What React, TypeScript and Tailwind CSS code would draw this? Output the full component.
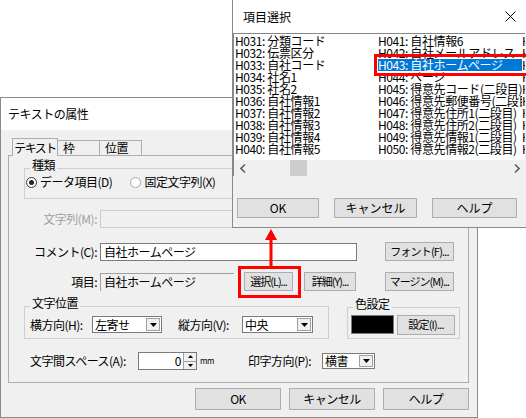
import React from 'react';

const col1 = [
  'H031: 分類コード',
  'H032: 伝票区分',
  'H033: 自社コード',
  'H034: 社名1',
  'H035: 社名2',
  'H036: 自社情報1',
  'H037: 自社情報2',
  'H038: 自社情報3',
  'H039: 自社情報4',
  'H040: 自社情報5',
];

const col2 = [
  'H041: 自社情報6',
  'H042: 自社メールアドレス',
  'H043: 自社ホームページ',
  'H044: ページ',
  'H045: 得意先コード(二段目)',
  'H046: 得意先郵便番号(二段目)',
  'H047: 得意先住所1(二段目)',
  'H048: 得意先住所2(二段目)',
  'H049: 得意先情報1(二段目)',
  'H050: 得意先情報2(二段目)',
];

const col3 = [
  'H051: 得意先情報3(二段目)',
  'H052: 得意先情報4(二段目)',
  'H053: 得意先情報5(二段目)',
  'H054: 得意先情報6(二段目)',
  'H055: 得意先情報7(二段目)',
  'H056: 得意先情報8(二段目)',
  'H057: 得意先情報9(二段目)',
  'H058: 得意先情報10(二段目)',
  'H059: 得意先情報11(二段目)',
  'H060: 得意先情報12(二段目)',
];

function Button({ label, className = '' }: { label: string; className?: string }) {
  return (
    <button
      className={`flex shrink-0 items-center justify-center overflow-hidden whitespace-nowrap border border-[#adadad] bg-[#e1e1e1] leading-none text-black ${className}`}
    >
      {label}
    </button>
  );
}

function Dropdown({ value, className = '' }: { value: string; className?: string }) {
  return (
    <div className={`flex shrink-0 items-stretch border border-[#7a7a7a] bg-white ${className}`}>
      <span className="flex flex-1 items-center whitespace-nowrap pl-[2px] leading-none">{value}</span>
      <span className="m-[1px] flex w-[14px] items-center justify-center border border-[#a0a0a0] bg-[#f0f0f0]">
        <svg width="7" height="4" viewBox="0 0 7 4">
          <path d="M0 0h7L3.5 4z" fill="#000" />
        </svg>
      </span>
    </div>
  );
}

function Group({ title, className = '', children }: { title: string; className?: string; children?: React.ReactNode }) {
  return (
    <div className={`relative shrink-0 border border-[#cfcfcf] ${className}`}>
      <span className="absolute -top-[11px] left-[5px] whitespace-nowrap bg-[#f0f0f0] px-[2px] leading-[14px]">{title}</span>
      {children}
    </div>
  );
}

function Radio({ checked, label }: { checked?: boolean; label: string }) {
  return (
    <label className="flex items-center gap-[3px] whitespace-nowrap">
      <span
        className={`flex h-[11px] w-[11px] items-center justify-center rounded-full border bg-white ${
          checked ? 'border-[#333]' : 'border-[#a8a8a8]'
        }`}
      >
        {checked && <span className="h-[5px] w-[5px] rounded-full bg-[#222]" />}
      </span>
      {label}
    </label>
  );
}

function Chevron({ dir }: { dir: 'left' | 'right' }) {
  return (
    <svg width="6" height="9" viewBox="0 0 6 9">
      <path
        d={dir === 'left' ? 'M5 0.5L1 4.5L5 8.5' : 'M1 0.5L5 4.5L1 8.5'}
        fill="none"
        stroke="#606060"
        strokeWidth="1.6"
      />
    </svg>
  );
}

function ListColumn({ items, width }: { items: string[]; width: string }) {
  return (
    <div className={`flex shrink-0 flex-col overflow-hidden ${width}`}>
      {items.map((t) => (
        <div
          key={t}
          className={`h-[12px] whitespace-nowrap ${t.startsWith('H043') ? 'bg-[#0078d7] text-white' : ''}`}
        >
          {t}
        </div>
      ))}
    </div>
  );
}

function ItemSelectDialog() {
  return (
    <div className="absolute left-[232px] top-0 flex h-[228px] w-[300px] flex-col border-b border-l border-[#8a8a8a] bg-[#f0f0f0]">
      <div className="flex h-[33px] shrink-0 items-center justify-between bg-white pl-[10px] pr-[16px]">
        <span className="text-[12px]">項目選択</span>
        <svg width="11" height="11" viewBox="0 0 11 11">
          <path d="M0.5 0.5L10.5 10.5M10.5 0.5L0.5 10.5" stroke="#000" strokeWidth="1" />
        </svg>
      </div>
      <div className="flex h-[143px] w-[292px] shrink-0 flex-col border-l border-t border-[#828790] bg-white">
        <div className="flex flex-1 overflow-hidden pl-[1px] pt-[1px] text-[12px] leading-[12px] tracking-[-0.4px]">
          <ListColumn items={col1} width="w-[143px]" />
          <ListColumn items={col2} width="w-[144px]" />
          <ListColumn items={col3} width="w-[150px]" />
        </div>
        <div className="flex h-[16px] shrink-0 bg-[#f0f0f0]">
          <div className="flex w-[17px] items-center justify-center">
            <Chevron dir="left" />
          </div>
          <div className="flex-1">
            <div className="ml-[39px] h-full w-[17px] bg-[#cdcdcd]" />
          </div>
          <div className="flex w-[17px] items-center justify-center">
            <Chevron dir="right" />
          </div>
        </div>
      </div>
      <div className="mt-[22px] flex">
        <Button label="OK" className="ml-[4px] h-[20px] w-[82px] border-[#333]" />
        <Button label="キャンセル" className="ml-[15px] h-[20px] w-[83px]" />
        <Button label="ヘルプ" className="ml-[15px] h-[20px] w-[85px]" />
      </div>
    </div>
  );
}

function TextAttrDialog() {
  return (
    <div className="absolute left-0 top-[97px] flex h-[321px] w-[478px] flex-col border border-[#8a8a8a] bg-[#f0f0f0] tracking-[-0.5px]">
      <div className="flex h-[32px] shrink-0 items-center bg-white pl-[7px]">テキストの属性</div>
      <div className="flex flex-col px-[7px]">
        <div className="mt-[8px] flex h-[17px] items-end pl-[4px]">
          <div className="relative z-10 -mb-[1px] flex h-[18px] w-[46px] items-center justify-center whitespace-nowrap border-x border-t border-[#adadad] bg-[#f0f0f0] tracking-[-1.5px]">
            テキスト
          </div>
          <div className="flex h-[15px] w-[42px] items-center border-r border-t border-[#adadad] pl-[5px]">枠</div>
          <div className="flex h-[15px] w-[42px] items-center border-r border-t border-[#adadad] pl-[5px]">位置</div>
        </div>
        <div className="flex h-[228px] w-[461px] flex-col border border-[#adadad]">
          <Group title="種類" className="ml-[15px] mt-[12px] flex h-[31px] w-[340px] items-center pb-[3px] pl-[1px]">
            <Radio checked label="データ項目(D)" />
            <span className="ml-[18px]">
              <Radio label="固定文字列(X)" />
            </span>
          </Group>

          <div className="mt-[11px] flex h-[18px] items-center">
            <span className="w-[88px] whitespace-nowrap text-right text-[#a0a0a0]">文字列(M):</span>
            <div className="ml-[3px] h-[18px] w-[257px] border border-[#cccccc] bg-[#f0f0f0]" />
          </div>

          <div className="mt-[14px] flex h-[19px] items-center">
            <span className="w-[88px] whitespace-nowrap text-right">コメント(C):</span>
            <div className="ml-[3px] flex h-[18px] w-[257px] items-center border border-[#7a7a7a] bg-white pl-[3px]">
              自社ホームページ
            </div>
            <Button label="フォント(F)..." className="ml-[28px] h-[19px] w-[69px] text-[11px] tracking-[-0.8px]" />
          </div>

          <div className="mt-[11px] flex h-[19px] items-center">
            <span className="w-[88px] text-right">項目:</span>
            <div className="ml-[3px] flex h-[18px] w-[134px] items-center border-l border-t border-[#a0a0a0] bg-[#f0f0f0] pl-[3px]">
              自社ホームページ
            </div>
            <div className="relative ml-[10px]">
              <Button label="選択(L)..." className="h-[19px] w-[49px] text-[11px] tracking-[-1px]" />
              <span className="absolute -bottom-[7px] -left-[6px] -right-[8px] -top-[6px] border-[3px] border-[#f00]" />
            </div>
            <Button label="詳細(Y)..." className="ml-[11px] h-[19px] w-[52px] text-[11px] tracking-[-1px]" />
            <Button label="マージン(M)..." className="ml-[29px] h-[19px] w-[69px] text-[11px] tracking-[-1px]" />
          </div>

          <div className="mt-[15px] flex">
            <Group title="文字位置" className="ml-[15px] flex h-[33px] w-[305px] items-center pl-[5px] pt-[4px]">
              <span className="w-[62px] whitespace-nowrap">横方向(H):</span>
              <Dropdown value="左寄せ" className="h-[17px] w-[70px]" />
              <span className="ml-[16px] w-[64px] whitespace-nowrap">縦方向(V):</span>
              <Dropdown value="中央" className="h-[17px] w-[71px]" />
            </Group>
            <Group title="色設定" className="ml-[18px] mt-[1px] flex h-[32px] w-[113px] items-center pl-[3px] pt-[3px]">
              <div className="h-[19px] w-[43px] border border-[#7a7a7a] bg-black" />
              <Button label="設定(I)..." className="ml-[3px] h-[20px] w-[58px] text-[11px] tracking-[-0.8px]" />
            </Group>
          </div>

          <div className="mt-[13px] flex h-[18px] items-center">
            <span className="ml-[21px] w-[108px] whitespace-nowrap">文字間スペース(A):</span>
            <div className="flex h-[18px] w-[59px] items-stretch border border-[#7a7a7a] bg-white">
              <span className="flex flex-1 items-center justify-end pr-[2px]">0</span>
              <div className="flex w-[13px] flex-col">
                <span className="flex flex-1 items-center justify-center border-b border-l border-[#a0a0a0] bg-[#f0f0f0]">
                  <svg width="5" height="3" viewBox="0 0 5 3">
                    <path d="M0 3h5L2.5 0z" fill="#000" />
                  </svg>
                </span>
                <span className="flex flex-1 items-center justify-center border-l border-[#a0a0a0] bg-[#f0f0f0]">
                  <svg width="5" height="3" viewBox="0 0 5 3">
                    <path d="M0 0h5L2.5 3z" fill="#000" />
                  </svg>
                </span>
              </div>
            </div>
            <span className="w-[51px] pl-[3px] text-[8px]">mm</span>
            <span className="w-[74px] whitespace-nowrap">印字方向(P):</span>
            <Dropdown value="横書" className="h-[16px] w-[53px]" />
          </div>
        </div>
        <div className="mt-[5px] flex justify-end gap-[8px] pr-[1px]">
          <Button label="OK" className="h-[22px] w-[86px]" />
          <Button label="キャンセル" className="h-[22px] w-[86px]" />
          <Button label="ヘルプ" className="h-[22px] w-[86px]" />
        </div>
      </div>
    </div>
  );
}

export default function App() {
  return (
    <div className="relative h-[418px] w-[526px] overflow-hidden bg-white font-['Noto_Sans_CJK_JP',sans-serif] text-[12px] text-black">
      <TextAttrDialog />
      <ItemSelectDialog />
      {/* red annotation box round the selected row */}
      <span className="absolute left-[374px] top-[54px] h-[22px] w-[160px] border-[3px] border-[#f00]" />
      {/* arrow from 選択 button up to the dialog */}
      <svg className="absolute left-[264px] top-[228px]" width="14" height="40" viewBox="0 0 14 40">
        <path d="M7 1L1 12H13z" fill="#f00" />
        <rect x="5.5" y="11" width="3" height="29" fill="#f00" />
      </svg>
    </div>
  );
}
